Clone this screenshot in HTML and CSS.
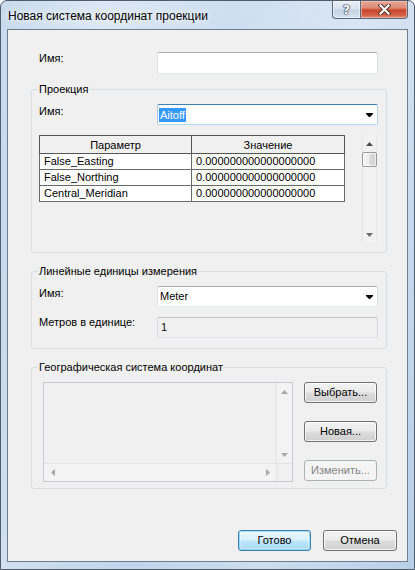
FILE: index.html
```html
<!DOCTYPE html>
<html lang="ru">
<head>
<meta charset="utf-8">
<title>Новая система координат проекции</title>
<link rel="stylesheet" href="styles.css">
</head>
<body>
<div class="window">
  <div class="titlebar">
    <div class="title">Новая система координат проекции</div>
    <div class="caption-buttons">
      <div class="cap-btn help"><span class="help-glyph">?</span></div>
      <div class="cap-btn close">
        <svg width="13" height="11" viewBox="0 0 13 11">
          <path d="M2.5 1.5 L10.5 9.5 M10.5 1.5 L2.5 9.5" stroke="#4b2a22" stroke-width="4" stroke-linecap="square" fill="none"/>
          <path d="M2.5 1.5 L10.5 9.5 M10.5 1.5 L2.5 9.5" stroke="#ffffff" stroke-width="2.2" stroke-linecap="square" fill="none"/>
        </svg>
      </div>
    </div>
  </div>

  <div class="client">
    <div class="top-row">
      <span class="lbl">Имя:</span>
      <div class="textbox"></div>
    </div>

    <fieldset class="group g1">
      <legend>Проекция</legend>
      <div class="row">
        <span class="lbl lbl-combo">Имя:</span>
        <div class="combo focused">
          <span class="combo-text"><span class="sel">Aitoff</span></span>
          <svg class="combo-arrow" width="7" height="4" viewBox="0 0 7 4"><polygon points="0,0 7,0 7,1 4,4 3,4 0,1" fill="#000"/></svg>
        </div>
      </div>
      <div class="grid-area">
        <table class="params">
          <colgroup><col class="c1"><col class="c2"></colgroup>
          <thead>
            <tr><th>Параметр</th><th>Значение</th></tr>
          </thead>
          <tbody>
            <tr><td>False_Easting</td><td>0.000000000000000000</td></tr>
            <tr><td>False_Northing</td><td>0.000000000000000000</td></tr>
            <tr><td>Central_Meridian</td><td>0.000000000000000000</td></tr>
          </tbody>
        </table>
        <div class="vscroll">
          <div class="sb-btn"><svg width="7" height="4" viewBox="0 0 7 4"><polygon points="0,4 3.5,0 7,4" fill="#4a4a4a"/></svg></div>
          <div class="thumb"></div>
          <div class="track"></div>
          <div class="sb-btn"><svg width="7" height="4" viewBox="0 0 7 4"><polygon points="0,0 7,0 3.5,4" fill="#6a6a6a"/></svg></div>
        </div>
      </div>
    </fieldset>

    <fieldset class="group g2">
      <legend>Линейные единицы измерения</legend>
      <div class="row">
        <span class="lbl lbl-combo">Имя:</span>
        <div class="combo">
          <span class="combo-text plain">Meter</span>
          <svg class="combo-arrow" width="7" height="4" viewBox="0 0 7 4"><polygon points="0,0 7,0 7,1 4,4 3,4 0,1" fill="#000"/></svg>
        </div>
      </div>
      <div class="row row2">
        <span class="lbl lbl-ro">Метров в единице:</span>
        <div class="readonly">1</div>
      </div>
    </fieldset>

    <fieldset class="group g3">
      <legend>Географическая система координат</legend>
      <div class="geo">
        <div class="listbox">
          <div class="lb-content"></div>
          <div class="lb-vscroll">
            <div class="sb-btn"><svg width="7" height="4" viewBox="0 0 7 4"><polygon points="0,4 3.5,0 7,4" fill="#a8a8a8"/></svg></div>
            <div class="sb-btn"><svg width="7" height="4" viewBox="0 0 7 4"><polygon points="0,0 7,0 3.5,4" fill="#a8a8a8"/></svg></div>
          </div>
          <div class="lb-hscroll">
            <div class="sb-hbtn"><svg width="4" height="7" viewBox="0 0 4 7"><polygon points="4,0 0,3.5 4,7" fill="#a8a8a8"/></svg></div>
            <div class="sb-hbtn"><svg width="4" height="7" viewBox="0 0 4 7"><polygon points="0,0 4,3.5 0,7" fill="#a8a8a8"/></svg></div>
          </div>
          <div class="lb-corner"></div>
        </div>
        <div class="side-buttons">
          <div class="btn">Выбрать...</div>
          <div class="btn">Новая...</div>
          <div class="btn disabled">Изменить...</div>
        </div>
      </div>
    </fieldset>

    <div class="dialog-buttons">
      <div class="btn default">Готово</div>
      <div class="btn wide">Отмена</div>
    </div>
  </div>
</div>
</body>
</html>
```

FILE: styles.css
```css
* { box-sizing: border-box; }

html, body {
  margin: 0;
  padding: 0;
}

body {
  font-family: "Liberation Sans", Arial, sans-serif;
  font-size: 11px;
  color: #000;
  background: #ffffff;
}

.window {
  width: 415px;
  height: 570px;
  border: 1px solid #4f5d6d;
  border-radius: 7px 7px 0 0;
  background:
    linear-gradient(100deg, rgba(255,255,255,0.0) 0%, rgba(255,255,255,0.35) 20%, rgba(255,255,255,0.1) 45%, rgba(255,255,255,0.3) 70%, rgba(255,255,255,0) 100%),
    linear-gradient(180deg, #c9dbef 0%, #bed3eb 40%, #b9cfe9 100%);
  display: flex;
  flex-direction: column;
  padding: 0 6px 7px 6px;
}

.titlebar {
  height: 28px;
  display: flex;
  align-items: flex-start;
  padding-left: 1px;
}

.title {
  font-size: 12px;
  line-height: 15px;
  padding-top: 8px;
  color: #000;
  text-shadow: 0 0 8px rgba(255,255,255,0.95), 0 0 4px rgba(255,255,255,0.8);
}

.caption-buttons {
  margin-left: auto;
  display: flex;
  height: 18px;
}

.cap-btn {
  height: 18px;
  display: flex;
  align-items: center;
  justify-content: center;
  border: 1px solid #5b6b7c;
  border-top: none;
}

.help {
  width: 28px;
  border-right: none;
  border-radius: 0 0 0 4px;
  background: linear-gradient(180deg, #e9eff6 0%, #d9e3ee 45%, #c5d3e2 55%, #d5e1ee 100%);
  box-shadow: inset 0 0 0 1px rgba(255,255,255,0.45);
}

.help-glyph {
  font-family: "DejaVu Sans", sans-serif;
  font-weight: bold;
  font-size: 12px;
  line-height: 12px;
  color: #ffffff;
  text-shadow: 0 0 1px #3a4656, 0 0 1px #3a4656, 0 0 1px #3a4656, 0 0 2px #3a4656;
  margin-top: 1px;
}

.close {
  width: 48px;
  border-radius: 0 0 4px 0;
  background: linear-gradient(180deg, #e8a998 0%, #dd8a76 40%, #c9472f 55%, #d5644a 85%, #e2937c 100%);
  box-shadow: inset 0 0 0 1px rgba(255,210,200,0.5);
}

.close svg { display: block; }

.client {
  flex: 1;
  background: #f0f0f0;
  border: 1px solid #6e7e8f;
  padding: 22px 10px 10px 23px;
  display: flex;
  flex-direction: column;
  align-items: flex-start;
}

.top-row {
  width: 356px;
  height: 22px;
  display: flex;
  align-items: flex-start;
  padding-left: 8px;
}

.lbl {
  width: 118px;
  line-height: 13px;
  flex: none;
}

.lbl-combo { padding-top: 1px; }
.lbl-ro { margin-top: -1px; }

.textbox {
  width: 221px;
  height: 22px;
  background: #ffffff;
  border: 1px solid;
  border-color: #abadb3 #dbdfe6 #e3e9ef #e2e3ea;
  border-radius: 2px;
}

.group {
  margin: 0;
  width: 356px;
  min-inline-size: 0;
  border: 1px solid #d5dfe5;
  border-radius: 3px;
  padding: 8px 8px 9px 7px;
}

.group legend {
  padding: 0 1px;
  margin-left: -1px;
  font-size: 11px;
  line-height: 13px;
}

.g1 { margin-top: 9px; }
.g2 { margin-top: 12px; padding-bottom: 10px; }
.g3 { margin-top: 12px; padding: 8px 9px 6px 11px; }
.g3 legend { margin-left: -5px; }

.row {
  display: flex;
  align-items: flex-start;
}

.row2 { margin-top: 10px; }

.combo {
  width: 221px;
  height: 21px;
  background: #ffffff;
  border: 1px solid;
  border-color: #abadb3 #dbdfe6 #e3e9ef #e2e3ea;
  border-radius: 2px;
  display: flex;
  align-items: center;
}

.combo.focused {
  border-color: #3c7fb1 #b5cfe7 #b7d9ed #a9c9e6;
}

.combo-text {
  flex: 1;
  padding-left: 1px;
  line-height: 13px;
}

.combo-text.plain { padding-left: 2px; }

.sel {
  background: #3399ff;
  color: #ffffff;
  padding: 0 1px;
  display: inline-block;
  line-height: 14px;
}

.combo-arrow {
  display: block;
  margin-right: 4px;
  flex: none;
}

.grid-area {
  display: flex;
  align-items: flex-start;
  margin-top: 10px;
  height: 108px;
}

.params {
  width: 306px;
  table-layout: fixed;
  border-collapse: collapse;
  background: #ffffff;
}

.params col.c1 { width: 152px; }

.params th,
.params td {
  border: 1px solid #6a6a6a;
  padding: 0 4px;
  font-weight: normal;
  white-space: nowrap;
  overflow: hidden;
}

.params th {
  background: #f0f0f0;
  line-height: 16px;
  height: 18px;
  text-align: center;
  border-color: #555555;
}

.params td {
  line-height: 15px;
  height: 16px;
  text-align: left;
}

.vscroll {
  margin-left: 17px;
  width: 15px;
  height: 108px;
  background: #f2f2f2;
  border-left: 1px solid #e6e6e6;
  border-right: 1px solid #e6e6e6;
  display: flex;
  flex-direction: column;
}

.sb-btn {
  height: 17px;
  display: flex;
  align-items: center;
  justify-content: center;
  flex: none;
}

.sb-btn svg, .sb-hbtn svg { display: block; }

.thumb {
  height: 15px;
  margin: 0 -1px;
  border: 1px solid #9a9a9a;
  border-radius: 2px;
  background: linear-gradient(90deg, #f6f6f6 0%, #ececec 45%, #dadada 55%, #d2d2d2 100%);
  box-shadow: inset 0 0 0 1px rgba(255,255,255,0.7);
  flex: none;
}

.track { flex: 1; }

.readonly {
  width: 221px;
  height: 21px;
  background: #f0f0f0;
  border: 1px solid;
  border-color: #c2c4c8 #d9dbe0 #dfe3e8 #d9dbe0;
  border-radius: 2px;
  padding-left: 3px;
  line-height: 19px;
  color: #1a0a1a;
}

.geo {
  display: flex;
  align-items: flex-start;
}

.listbox {
  width: 250px;
  height: 100px;
  border: 1px solid #c9ccd0;
  background: #f0f0f0;
  display: grid;
  grid-template-columns: 1fr 16px;
  grid-template-rows: 1fr 18px;
}

.lb-content { background: #f0f0f0; }

.lb-vscroll {
  border-left: 1px solid #e3e3e3;
  background: #f3f3f3;
  display: flex;
  flex-direction: column;
  justify-content: space-between;
}

.lb-hscroll {
  border-top: 1px solid #e3e3e3;
  background: #f3f3f3;
  display: flex;
  justify-content: space-between;
}

.sb-hbtn {
  width: 17px;
  display: flex;
  align-items: center;
  justify-content: center;
}

.lb-corner {
  background: #f0f0f0;
  border-top: 1px solid #e3e3e3;
  border-left: 1px solid #e3e3e3;
}

.side-buttons {
  margin-left: 11px;
  display: flex;
  flex-direction: column;
  gap: 18px;
}

.btn {
  width: 73px;
  height: 21px;
  border: 1px solid #707070;
  border-radius: 3px;
  background: linear-gradient(180deg, #f2f2f2 0%, #ebebeb 48%, #dddddd 52%, #cfcfcf 100%);
  box-shadow: inset 0 0 0 1px rgba(255,255,255,0.75);
  text-align: center;
  line-height: 19px;
  color: #000;
}

.btn.disabled {
  border-color: #adb2b5;
  background: #f4f4f4;
  box-shadow: none;
  color: #838383;
}

.btn.default {
  border-color: #3c7fb1;
  background: linear-gradient(180deg, #eaf6fd 0%, #d9f0fc 48%, #bee6fd 52%, #a7d9f5 100%);
  box-shadow: inset 0 0 0 1px rgba(96,196,246,0.55), inset 0 0 0 2px rgba(255,255,255,0.35);
}

.btn.wide { width: 74px; }

.dialog-buttons {
  margin-top: auto;
  align-self: flex-end;
  display: flex;
  gap: 12px;
}
```
